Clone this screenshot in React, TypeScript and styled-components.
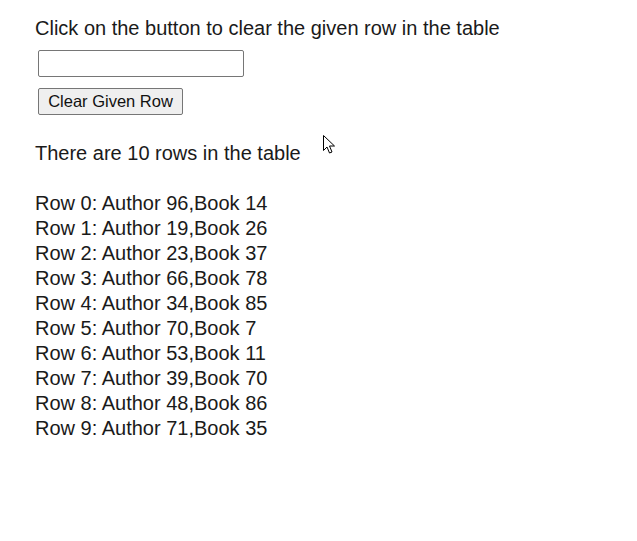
import React from "react";
import styled, { createGlobalStyle } from "styled-components";

const Global = createGlobalStyle`
  html, body { margin: 0; padding: 0; background: #ffffff; }
  body { font-family: "Liberation Sans", Arial, sans-serif; color: #1a1a1a; }
`;

const Page = styled.div`
  position: relative;
  width: 637px;
  height: 541px;
  padding: 16px 0 0 35px;
  box-sizing: border-box;
  font-size: 20px;
  line-height: 25px;
`;

const Line = styled.div`
  white-space: nowrap;
`;

const Controls = styled.div`
  display: flex;
  flex-direction: column;
  align-items: flex-start;
  gap: 11px;
  margin: 9px 0 0 3px;
`;

const TextInput = styled.input`
  width: 206px;
  height: 27px;
  box-sizing: border-box;
  border: 1px solid #767676;
  border-radius: 2px;
  padding: 1px 2px;
  margin: 0;
  font: 15px "Liberation Sans", Arial, sans-serif;
  background: #fff;
`;

const Button = styled.button`
  width: 145px;
  height: 27px;
  box-sizing: border-box;
  border: 1px solid #767676;
  border-radius: 2px;
  background: #efefef;
  color: #111;
  padding: 0 4px;
  margin: 0;
  font: 16.5px "Liberation Sans", Arial, sans-serif;
`;

const Count = styled(Line)`
  margin-top: 26px;
`;

const Rows = styled.div`
  margin-top: 25px;
  display: flex;
  flex-direction: column;
`;

const Cursor = styled.svg`
  position: absolute;
  left: 322px;
  top: 134px;
`;

const rows = [
  [96, 14],
  [19, 26],
  [23, 37],
  [66, 78],
  [34, 85],
  [70, 7],
  [53, 11],
  [39, 70],
  [48, 86],
  [71, 35],
];

export default function App() {
  return (
    <>
      <Global />
      <Page>
        <Line>Click on the button to clear the given row in the table</Line>
        <Controls>
          <TextInput type="text" />
          <Button>Clear Given Row</Button>
        </Controls>
        <Count>There are 10 rows in the table</Count>
        <Rows>
          {rows.map(([a, b], i) => (
            <Line key={i}>{`Row ${i}: Author ${a},Book ${b}`}</Line>
          ))}
        </Rows>
        <Cursor width="14" height="22" viewBox="0 0 14 22">
          <path
            d="M1.5 1.5 L1.5 16.5 L5 13 L7.5 19 L10 18 L7.5 12 L12.5 12 Z"
            fill="#fff"
            stroke="#000"
            strokeWidth="1"
            strokeLinejoin="miter"
          />
        </Cursor>
      </Page>
    </>
  );
}
